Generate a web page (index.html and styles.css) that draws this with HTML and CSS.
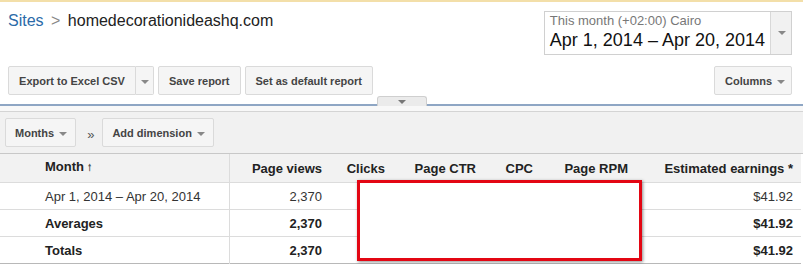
FILE: index.html
```html
<!DOCTYPE html>
<html lang="en">
<head>
    <meta charset="UTF-8">
    <title>Sites - homedecorationideashq.com</title>
    <link rel="stylesheet" href="styles.css">
</head>
<body>

    <div class="page">
        <!-- Header: breadcrumb + date range -->
        <div class="top">
            <div class="crumbs">
                <a href="#" class="crumb-link">Sites</a>
                <span class="crumb-sep">&gt;</span>
                <span class="crumb-current">homedecorationideashq.com</span>
            </div>
            <div class="date-picker">
                <div class="date-text">
                    <div class="date-label">This month (+02:00) Cairo</div>
                    <div class="date-range">Apr 1, 2014 &ndash; Apr 20, 2014</div>
                </div>
                <div class="date-arrow"><span class="caret"></span></div>
            </div>
        </div>

        <!-- Report actions -->
        <div class="actions">
            <div class="btn-split">
                <button class="btn btn-main">Export to Excel CSV</button>
                <button class="btn btn-drop"><span class="caret"></span></button>
            </div>
            <button class="btn">Save report</button>
            <button class="btn">Set as default report</button>
            <button class="btn btn-columns">Columns <span class="caret"></span></button>
        </div>

        <div class="divider">
            <div class="collapse-tab"><span class="caret"></span></div>
        </div>

        <!-- Dimension toolbar -->
        <div class="toolbar">
            <button class="btn btn-dim">Months <span class="caret"></span></button>
            <span class="chevrons">&raquo;</span>
            <button class="btn btn-dim">Add dimension <span class="caret"></span></button>
        </div>

        <!-- Report table -->
        <div class="table-wrap">
            <table class="report">
                <colgroup>
                    <col class="c-month">
                    <col class="c-views">
                    <col class="c-clicks">
                    <col class="c-ctr">
                    <col class="c-cpc">
                    <col class="c-rpm">
                    <col class="c-earn">
                </colgroup>
                <thead>
                    <tr>
                        <th class="first">Month <span class="sort">&#129041;</span></th>
                        <th class="num">Page views</th>
                        <th class="num">Clicks</th>
                        <th class="num">Page CTR</th>
                        <th class="num">CPC</th>
                        <th class="num">Page RPM</th>
                        <th class="num">Estimated earnings *</th>
                    </tr>
                </thead>
                <tbody>
                    <tr>
                        <td class="first">Apr 1, 2014 &ndash; Apr 20, 2014</td>
                        <td class="num">2,370</td>
                        <td class="num"></td>
                        <td class="num"></td>
                        <td class="num"></td>
                        <td class="num"></td>
                        <td class="num">$41.92</td>
                    </tr>
                    <tr class="bold">
                        <td class="first">Averages</td>
                        <td class="num">2,370</td>
                        <td class="num"></td>
                        <td class="num"></td>
                        <td class="num"></td>
                        <td class="num"></td>
                        <td class="num">$41.92</td>
                    </tr>
                    <tr class="bold">
                        <td class="first">Totals</td>
                        <td class="num">2,370</td>
                        <td class="num"></td>
                        <td class="num"></td>
                        <td class="num"></td>
                        <td class="num"></td>
                        <td class="num">$41.92</td>
                    </tr>
                </tbody>
            </table>
            <!-- highlight box drawn over the hidden columns -->
            <div class="redact-box"></div>
        </div>
    </div>

</body>
</html>
```

FILE: styles.css
```css
/* General Styles */
body {
    margin: 0;
    padding: 0;
    background-color: #fff;
    font-family: "Liberation Sans", Arial, sans-serif;
    color: #222;
}

.page {
    width: 803px;
    border-top: 2px solid #f3dfa9;
}

/* Header */
.top {
    display: flex;
    justify-content: space-between;
    align-items: flex-start;
    height: 55px;
    padding: 9px 11px 0 8px;
}

.crumbs {
    font-size: 16px;
    line-height: 20px;
}

.crumb-link {
    color: #2b6aa8;
    text-decoration: none;
}

.crumb-sep {
    color: #888;
    margin: 0 3px;
}

.crumb-current {
    color: #222;
}

.date-picker {
    display: flex;
    height: 42px;
    border: 1px solid #d0d0d0;
    background-color: #fff;
}

.date-text {
    padding: 1px 5px 0 5px;
    white-space: nowrap;
}

.date-label {
    font-size: 13px;
    line-height: 16px;
    color: #777;
}

.date-range {
    font-size: 18px;
    line-height: 22px;
    color: #111;
}

.date-arrow {
    width: 20px;
    border-left: 1px solid #d8d8d8;
    background-color: #f1f1f1;
    display: flex;
    align-items: center;
    justify-content: center;
}

.caret {
    display: inline-block;
    width: 0;
    height: 0;
    border-left: 4px solid transparent;
    border-right: 4px solid transparent;
    border-top: 4px solid #888;
    vertical-align: middle;
    margin-left: 2px;
}

/* Buttons */
.btn {
    height: 29px;
    padding: 0 10px;
    font-family: "Liberation Sans", Arial, sans-serif;
    font-size: 11px;
    font-weight: bold;
    color: #444;
    background-color: #f5f5f5;
    border: 1px solid #dadada;
    border-radius: 2px;
    white-space: nowrap;
}

.actions {
    display: flex;
    gap: 4px;
    padding: 0 11px 0 8px;
    height: 29px;
}

.btn-split {
    display: flex;
}

.btn-main {
    width: 128px;
    border-radius: 2px 0 0 2px;
}

.btn-drop {
    width: 18px;
    padding: 0;
    border-left: none;
    border-radius: 0 2px 2px 0;
}

.btn-drop .caret {
    margin: 0;
}

.btn-columns {
    margin-left: auto;
    width: 78px;
}

/* Divider with collapse tab */
.divider {
    display: flex;
    justify-content: center;
    align-items: flex-end;
    height: 9px;
    border-bottom: 2px solid #8ea6c4;
}

.collapse-tab {
    width: 48px;
    height: 9px;
    margin-bottom: -2px;
    margin-left: 1px;
    background-color: #ebebeb;
    border: 1px solid #cfcfcf;
    border-bottom: none;
    border-radius: 3px 3px 0 0;
    display: flex;
    justify-content: center;
    align-items: center;
}

.collapse-tab .caret {
    margin: 0;
    border-top-color: #777;
}

/* Dimension toolbar */
.toolbar {
    display: flex;
    align-items: center;
    height: 41px;
    padding: 1px 0 0 5px;
    background-color: #f1f1f1;
    border-top: 5px solid #f8f8f8;
    border-bottom: 1px solid #c8c8c8;
    box-shadow: inset 0 1px 0 #d4d4d4;
}

.btn-dim {
    padding: 0 8px 0 9px;
}

.chevrons {
    font-size: 13px;
    color: #555;
    margin: 3px 8px 0 11px;
}

/* Report table */
.table-wrap {
    position: relative;
}

.report {
    width: 801px;
    border-collapse: collapse;
    table-layout: fixed;
    font-size: 13px;
    border-bottom: 1px solid #b8b8b8;
}

.c-month { width: 229px; }
.c-views { width: 101px; }
.c-clicks { width: 63px; }
.c-ctr { width: 91px; }
.c-cpc { width: 57px; }
.c-rpm { width: 95px; }
.c-earn { width: 165px; }

.report th {
    height: 28px;
    font-weight: bold;
    color: #222;
    background-color: #f2f2f2;
    padding: 0 8px;
    white-space: nowrap;
}

.report td {
    height: 26px;
    padding: 0 8px;
    border-top: 1px solid #dcdcdc;
    color: #333;
}

.report .first {
    padding-left: 45px;
    text-align: left;
    border-right: 1px solid #dcdcdc;
}

.report .num {
    text-align: right;
}

.report tr.bold td {
    font-weight: bold;
    color: #222;
}

.sort {
    font-size: 9px;
    color: #555;
}

.redact-box {
    position: absolute;
    left: 357px;
    top: 26px;
    width: 279px;
    height: 75px;
    border: 3px solid #e30613;
    background-color: #fff;
    box-shadow: 1px 1px 3px rgba(0, 0, 0, 0.45);
}
```
